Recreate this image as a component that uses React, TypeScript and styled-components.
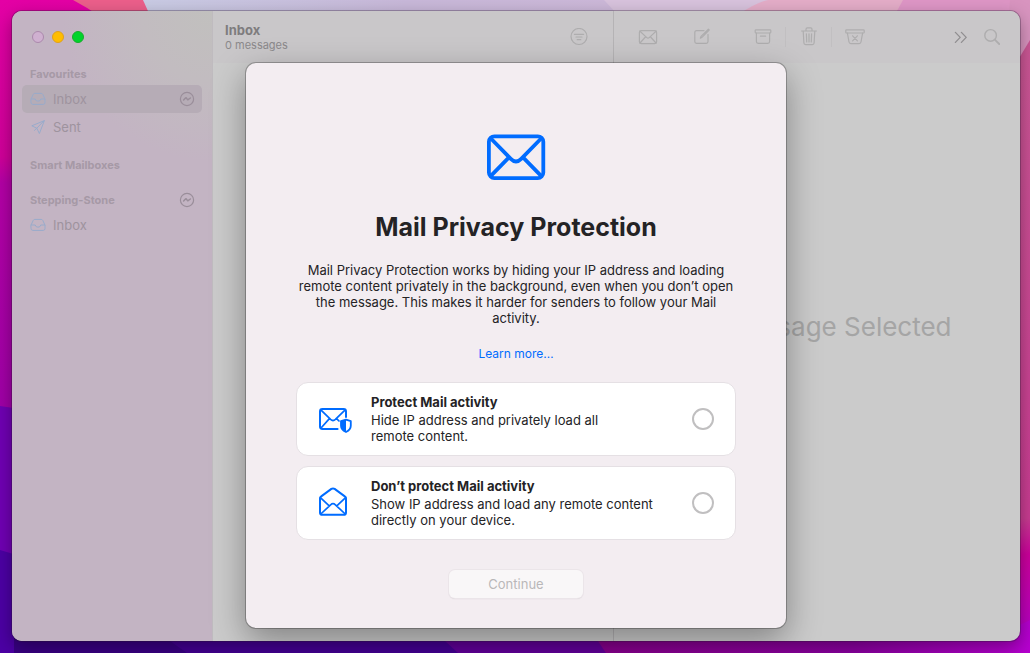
import React from "react";
import styled, { createGlobalStyle } from "styled-components";

const GlobalStyle = createGlobalStyle`
  *, *::before, *::after { box-sizing: border-box; }
  body {
    margin: 0;
    font-family: Inter, "Liberation Sans", sans-serif;
    font-size: 13px;
    line-height: 16px;
    color: #242325;
  }
  h1, h2, p { margin: 0; }
  button { font: inherit; padding: 0; border: 0; background: none; }
`;

const Desktop = styled.div`
  position: relative;
  display: grid;
  min-height: 100vh;
  padding: 11px 10px 12px 12px;
  overflow: hidden;
`;

const WallpaperSvg = styled.svg`
  position: absolute;
  inset: 0;
  width: 100%;
  height: 100%;
`;

const AppWindow = styled.div`
  position: relative;
  display: grid;
  border-radius: 10px;
  overflow: hidden;
  background: #cbcbcb;
  box-shadow: 0 0 0 1px rgba(40, 20, 50, 0.3), 0 6px 18px rgba(0, 0, 0, 0.35);
`;

const MailLayout = styled.div`
  grid-area: 1 / 1;
  display: grid;
  grid-template-columns: 200px minmax(0, 401fr) minmax(0, 407fr);
`;

const Sidebar = styled.nav`
  display: flex;
  flex-direction: column;
  padding: 0 10px;
  background: radial-gradient(circle at 100% 0, #c1c0be 0, #c2bcc0 70px, #c3b4c3 150px);
`;

const WindowControls = styled.div`
  display: flex;
  align-items: center;
  gap: 8px;
  height: 52px;
  padding-left: 10px;
`;

const WindowControl = styled.button<{ $fill: string; $edge: string }>`
  width: 12px;
  height: 12px;
  border-radius: 50%;
  border: 1px solid ${(p) => p.$edge};
  background: ${(p) => p.$fill};
`;

const SidebarSection = styled.section`
  margin-bottom: 13px;
`;

const SectionTitle = styled.h2`
  display: flex;
  align-items: center;
  justify-content: space-between;
  height: 22px;
  padding: 0 7px 0 8px;
  font-size: 11px;
  font-weight: 700;
  color: #a699a6;
`;

const MailboxLink = styled.a<{ $selected?: boolean }>`
  display: flex;
  align-items: center;
  gap: 7px;
  height: 28px;
  padding: 0 7px 0 8px;
  border-radius: 5px;
  color: #9e939e;
  text-decoration: none;
  background: ${(p) => (p.$selected ? "#b6acb6" : "transparent")};
`;

const MailboxName = styled.span`
  flex: 1;
`;

const Pane = styled.section<{ $divided?: boolean }>`
  display: flex;
  flex-direction: column;
  min-width: 0;
  border-left: 1px solid ${(p) => (p.$divided ? "#b5b3b5" : "#bfbbbf")};
`;

const Toolbar = styled.header`
  display: flex;
  align-items: center;
  height: 52px;
  background: #c9c7c9;
  color: #aeadae;
`;

const ListToolbar = styled(Toolbar)`
  justify-content: space-between;
  padding: 0 17px 0 12px;
`;

const MessageToolbar = styled(Toolbar)`
  padding: 0 16px;
`;

const ListTitle = styled.h2`
  font-size: 13px;
  line-height: 16px;
  font-weight: 700;
  color: #7e7c7e;
`;

const ListCount = styled.p`
  font-size: 11px;
  line-height: 14px;
  color: #8b898b;
`;

const ToolGroup = styled.div<{ $gap: number; $before?: number }>`
  display: flex;
  align-items: center;
  gap: ${(p) => p.$gap}px;
  margin-left: ${(p) => p.$before ?? 0}px;
`;

const ToolEnd = styled(ToolGroup)`
  margin-left: auto;
`;

const ToolButton = styled.button<{ $width?: number }>`
  display: flex;
  align-items: center;
  justify-content: center;
  width: ${(p) => p.$width ?? 35}px;
  height: 28px;
  color: inherit;
`;

const MoreButton = styled(ToolButton)`
  color: #908e90;
`;

const ToolDivider = styled.span`
  width: 1px;
  height: 20px;
  background: #c1bfc1;
`;

const EmptyMessage = styled.p`
  display: flex;
  flex: 1;
  align-items: center;
  justify-content: center;
  padding-bottom: 50px;
  font-size: 26px;
  line-height: 32px;
  white-space: nowrap;
  color: #a5a5a5;
`;

const Sheet = styled.div`
  grid-area: 1 / 1;
  position: relative;
  align-self: start;
  justify-self: center;
  display: flex;
  flex-direction: column;
  align-items: center;
  width: 100%;
  max-width: 540px;
  margin: 52px 0 13px;
  padding: 71px 50px 30px;
  border-radius: 10px;
  background: #f3edf1;
  box-shadow: 0 0 0 1px rgba(0, 0, 0, 0.25), 0 12px 34px rgba(0, 0, 0, 0.36);
`;

const SheetTitle = styled.h1`
  margin-top: 31px;
  font-size: 25px;
  line-height: 32px;
  font-weight: 700;
  white-space: nowrap;
`;

const SheetText = styled.p`
  margin-top: 19px;
  text-align: center;
  white-space: nowrap;
`;

const LearnMore = styled.a`
  margin-top: 20px;
  font-size: 12px;
  color: #006cff;
  text-decoration: none;
`;

const Options = styled.div`
  display: flex;
  flex-direction: column;
  gap: 10px;
  width: 100%;
  margin-top: 20px;
`;

const OptionCard = styled.label`
  display: flex;
  align-items: center;
  padding: 11px 21px;
  border: 1px solid #e5e0e4;
  border-radius: 12px;
  background: #ffffff;
`;

const OptionIcon = styled.span`
  display: flex;
  width: 53px;
`;

const OptionBody = styled.span`
  display: flex;
  flex: 1;
  flex-direction: column;
  gap: 2px;
  white-space: nowrap;
`;

const OptionName = styled.strong`
  font-weight: 700;
`;

const OptionRadio = styled.input`
  appearance: none;
  width: 22px;
  height: 22px;
  margin: 0;
  border: 2px solid #c0bfc0;
  border-radius: 50%;
  background: #ffffff;
  &:checked { border: 6px solid #006cff; }
`;

const ContinueButton = styled.button`
  width: 134px;
  height: 28px;
  margin-top: 30px;
  border-radius: 6px;
  color: #b9b7b9;
  background: #f9f7f8;
  box-shadow: 0 0 0 1px #ebe5e9, 0 1px 1px 0 #c8c3c7;
`;

const stroke = {
  fill: "none",
  stroke: "currentColor",
  strokeLinecap: "round" as const,
  strokeLinejoin: "round" as const,
};

const Wallpaper = () => (
  <WallpaperSvg viewBox="0 0 1030 653" preserveAspectRatio="none" aria-hidden="true">
    <defs>
      <linearGradient id="left" x1="0" y1="0" x2="0" y2="1">
        <stop offset="0" stopColor="#e400a5" />
        <stop offset="0.24" stopColor="#d0009a" />
        <stop offset="0.28" stopColor="#b400a6" />
        <stop offset="1" stopColor="#8a00a8" />
      </linearGradient>
      <linearGradient id="right" x1="0" y1="0" x2="0" y2="1">
        <stop offset="0" stopColor="#cb5795" />
        <stop offset="0.78" stopColor="#c83c91" />
        <stop offset="0.84" stopColor="#cc009c" />
        <stop offset="1" stopColor="#b000cc" />
      </linearGradient>
      <linearGradient id="top" x1="0" y1="0" x2="1" y2="0">
        <stop offset="0" stopColor="#c9cbe4" />
        <stop offset="0.4" stopColor="#c8b8d9" />
        <stop offset="1" stopColor="#d0b8d8" />
      </linearGradient>
      <linearGradient id="floor" x1="0" y1="0" x2="1" y2="0">
        <stop offset="0" stopColor="#86008a" />
        <stop offset="0.6" stopColor="#8a00a0" />
        <stop offset="1" stopColor="#b600cf" />
      </linearGradient>
    </defs>
    <rect width="1030" height="653" fill="url(#left)" />
    <path d="M73 0H160V40H130Q100 14 73 0Z" fill="#ec5f8b" />
    <path d="M143 0H800V60H170Z" fill="url(#top)" />
    <path d="M604 0H900V60H660Z" fill="#d8c3dd" />
    <path d="M738 15Q755 3 768 0H910V40H730Z" fill="#e4adc8" />
    <path d="M903 0H1030V60H870Z" fill="#de96c6" />
    <path d="M1010 0H1030V80H1005Z" fill="#d894bf" />
    <path d="M1030 40V653H1000V90Z" fill="url(#right)" />
    <path d="M0 406L40 412V653H0Z" fill="#7000b3" />
    <path d="M0 550L40 562V653H0Z" fill="#4c00a4" />
    <path d="M14 630H600L640 653H14Z" fill="#380082" />
    <path d="M165 636H460V653H187L170 641Z" fill="#430092" />
    <path d="M438 630H600L610 653H458L445 641Z" fill="#600098" />
    <path d="M590 630H1010L1030 620V653H606L598 641Z" fill="url(#floor)" />
  </WallpaperSvg>
);

const TrayIcon = () => (
  <svg width="16" height="14" viewBox="0 0 16 14" {...stroke} color="#98abcb" aria-hidden="true">
    <path d="M1 7.2L3.2 2.4Q3.7 1.4 4.8 1.4H11.2Q12.3 1.4 12.8 2.4L15 7.2V10.6Q15 12.4 13.2 12.4H2.8Q1 12.4 1 10.6ZM1.2 7H5.2Q5.6 9.2 8 9.2T10.8 7H14.8" />
  </svg>
);

const PlaneIcon = () => (
  <svg width="16" height="16" viewBox="0 0 16 16" {...stroke} color="#98abcb" aria-hidden="true">
    <path d="M14 1.8L1.8 6.8L6.8 9.2L9.2 14.2ZM6.8 9.2L14 1.8M6.4 9.4L4.6 11.4" />
  </svg>
);

const OfflineIcon = () => (
  <svg width="16" height="16" viewBox="0 0 16 16" {...stroke} strokeWidth="1.2" color="#9a8e9a" aria-hidden="true">
    <circle cx="8" cy="8" r="6.6" />
    <path d="M4.6 9L6.7 6.8Q7 6.6 7.3 6.9L8.5 8.6Q8.8 8.9 9.1 8.6L11.4 7" strokeWidth="1.5" />
  </svg>
);

const FilterIcon = () => (
  <svg width="18" height="18" viewBox="0 0 18 18" {...stroke} strokeWidth="1.2" aria-hidden="true">
    <circle cx="9" cy="8.5" r="8" />
    <path d="M4.4 6.3H13.6M6 9H12M7.2 11.7H10.8" />
  </svg>
);

const MailIcon = () => (
  <svg width="20" height="16" viewBox="0 0 20 16" {...stroke} strokeWidth="1.2" aria-hidden="true">
    <rect x="1.4" y="1.6" width="17.2" height="13" rx="1.8" />
    <path d="M2 2.2L8.8 8.6Q10 9.7 11.2 8.6L18 2.2M2 14L7.4 8M18 14L12.6 8" />
  </svg>
);

const ComposeIcon = () => (
  <svg width="18" height="18" viewBox="0 0 18 18" {...stroke} strokeWidth="1.2" aria-hidden="true">
    <path d="M11 2.6H3.6Q1.8 2.6 1.8 4.4V13.6Q1.8 15.4 3.6 15.4H13.2Q15 15.4 15 13.6V6.4" />
    <path d="M7.4 10.2L8 8.4L15.4 1.2L16.2 2L9 9.3Z" />
  </svg>
);

const ArchiveIcon = () => (
  <svg width="18" height="16" viewBox="0 0 18 16" {...stroke} strokeWidth="1.2" aria-hidden="true">
    <rect x="1.2" y="0.8" width="15.6" height="3.2" rx="0.8" />
    <path d="M2.4 4.2V12.6Q2.4 14.4 4.2 14.4H13.8Q15.6 14.4 15.6 12.6V4.2M6.4 7.2H11.6" />
  </svg>
);

const TrashIcon = () => (
  <svg width="18" height="20" viewBox="0 0 18 20" {...stroke} strokeWidth="1.2" aria-hidden="true">
    <path d="M1.6 4H16.4M6 3.8V2.2Q6 0.8 7.4 0.8H10.6Q12 0.8 12 2.2V3.8M3.2 4.2L3.9 16Q4 17.6 5.6 17.6H12.4Q14 17.6 14.1 16L14.8 4.2M6.4 6.8L6.7 15M9 6.8V15M11.6 6.8L11.3 15" />
  </svg>
);

const JunkIcon = () => (
  <svg width="20" height="16" viewBox="0 0 20 16" {...stroke} strokeWidth="1.2" aria-hidden="true">
    <rect x="0.8" y="0.8" width="18.4" height="3.2" rx="0.8" />
    <path d="M2.4 4.2L4 13Q4.3 14.6 5.8 14.6H14.2Q15.7 14.6 16 13L17.6 4.2M7.6 6.8L12.4 11.8M12.4 6.8L7.6 11.8" />
  </svg>
);

const MoreIcon = () => (
  <svg width="14" height="12" viewBox="0 0 14 12" {...stroke} strokeWidth="1.3" aria-hidden="true">
    <path d="M1.4 1.4L6.2 6.4L1.4 11.4M7.4 1.4L12.2 6.4L7.4 11.4" />
  </svg>
);

const SearchIcon = () => (
  <svg width="18" height="18" viewBox="0 0 18 18" {...stroke} strokeWidth="1.4" aria-hidden="true">
    <circle cx="7.6" cy="7.4" r="5.8" />
    <path d="M11.8 11.6L16.2 16" strokeWidth="1.8" />
  </svg>
);

const HeroMailIcon = () => (
  <svg width="60" height="46" viewBox="0 0 60 46" {...stroke} strokeWidth="3.8" color="#006cff" aria-hidden="true">
    <rect x="2.9" y="2.3" width="54.4" height="41.8" rx="5.5" />
    <path d="M4.4 4L24.8 24.8Q30 30 35.2 24.8L55.6 4M4.4 42.4L22 24.4M55.6 42.4L38 24.4" strokeLinecap="butt" />
  </svg>
);

const ShieldMailIcon = () => (
  <svg width="36" height="28" viewBox="0 0 36 28" {...stroke} strokeWidth="2" color="#006cff" aria-hidden="true">
    <path d="M19.6 24H4.4Q2 24 2 21.6V6.4Q2 4 4.4 4H25.6Q28 4 28 6.4V12" />
    <path d="M2.8 4.8L12.6 14.4Q15 16.6 17.4 14.4L27.2 4.8M2.8 23.2L11.4 13.6M18.6 13.6L21 16" strokeWidth="1.7" />
    <path d="M28 14.6L32.8 16.2V20.8Q32.8 24.8 28 27Q23 24.8 23 20.8V16.2Z" strokeWidth="1.8" />
    <path d="M28 14.6V27Q23 24.8 23 20.8V16.2Z" fill="currentColor" stroke="none" />
  </svg>
);

const OpenMailIcon = () => (
  <svg width="30" height="32" viewBox="0 0 30 32" {...stroke} strokeWidth="2" color="#006cff" aria-hidden="true">
    <path d="M2 11.6Q2 10.2 3.2 9.4L13.4 1.9Q15 0.9 16.6 1.9L26.8 9.4Q28 10.2 28 11.6V25.4Q28 27.8 25.6 27.8H4.4Q2 27.8 2 25.4Z" />
    <path d="M2.8 27L12.6 17.8Q15 15.6 17.4 17.8L27.2 27M2.4 10.6L11.2 18.8M27.6 10.6L18.8 18.8" strokeWidth="1.7" />
  </svg>
);

const options = [
  {
    id: "protect",
    name: "Protect Mail activity",
    lines: ["Hide IP address and privately load all", "remote content."],
    icon: <ShieldMailIcon />,
  },
  {
    id: "expose",
    name: "Don’t protect Mail activity",
    lines: ["Show IP address and load any remote content", "directly on your device."],
    icon: <OpenMailIcon />,
  },
];

export default function App() {
  return (
    <>
      <GlobalStyle />
      <Desktop>
        <Wallpaper />
        <AppWindow>
          <MailLayout>
            <Sidebar aria-label="Mailboxes">
              <WindowControls>
                <WindowControl aria-label="Close" $fill="#cfb0d0" $edge="#ab89ac" />
                <WindowControl aria-label="Minimise" $fill="#ffbd00" $edge="#e0a01c" />
                <WindowControl aria-label="Zoom" $fill="#00d42b" $edge="#18ac2c" />
              </WindowControls>
              <SidebarSection>
                <SectionTitle>Favourites</SectionTitle>
                <MailboxLink href="#inbox" $selected>
                  <TrayIcon />
                  <MailboxName>Inbox</MailboxName>
                  <OfflineIcon />
                </MailboxLink>
                <MailboxLink href="#sent">
                  <PlaneIcon />
                  <MailboxName>Sent</MailboxName>
                </MailboxLink>
              </SidebarSection>
              <SidebarSection>
                <SectionTitle>Smart Mailboxes</SectionTitle>
              </SidebarSection>
              <SidebarSection>
                <SectionTitle>
                  Stepping-Stone
                  <OfflineIcon />
                </SectionTitle>
                <MailboxLink href="#stepping-stone">
                  <TrayIcon />
                  <MailboxName>Inbox</MailboxName>
                </MailboxLink>
              </SidebarSection>
            </Sidebar>

            <Pane>
              <ListToolbar>
                <div>
                  <ListTitle>Inbox</ListTitle>
                  <ListCount>0 messages</ListCount>
                </div>
                <ToolButton aria-label="Filter"><FilterIcon /></ToolButton>
              </ListToolbar>
            </Pane>

            <Pane $divided>
              <MessageToolbar>
                <ToolGroup $gap={19}>
                  <ToolButton aria-label="Get mail"><MailIcon /></ToolButton>
                  <ToolButton aria-label="New message"><ComposeIcon /></ToolButton>
                </ToolGroup>
                <ToolGroup $gap={5} $before={26}>
                  <ToolButton aria-label="Archive"><ArchiveIcon /></ToolButton>
                  <ToolDivider />
                  <ToolButton aria-label="Delete"><TrashIcon /></ToolButton>
                  <ToolDivider />
                  <ToolButton aria-label="Junk"><JunkIcon /></ToolButton>
                </ToolGroup>
                <ToolEnd $gap={7}>
                  <MoreButton aria-label="More" $width={24}><MoreIcon /></MoreButton>
                  <ToolButton aria-label="Search" $width={24}><SearchIcon /></ToolButton>
                </ToolEnd>
              </MessageToolbar>
              <EmptyMessage>No Message Selected</EmptyMessage>
            </Pane>
          </MailLayout>

          <Sheet role="dialog" aria-labelledby="sheet-title">
            <HeroMailIcon />
            <SheetTitle id="sheet-title">Mail Privacy Protection</SheetTitle>
            <SheetText>
              Mail Privacy Protection works by hiding your IP address and loading<br />
              remote content privately in the background, even when you don’t open<br />
              the message. This makes it harder for senders to follow your Mail<br />
              activity.
            </SheetText>
            <LearnMore href="#learn-more">Learn more…</LearnMore>
            <Options role="radiogroup" aria-labelledby="sheet-title">
              {options.map((o) => (
                <OptionCard key={o.id} htmlFor={o.id}>
                  <OptionIcon>{o.icon}</OptionIcon>
                  <OptionBody>
                    <OptionName>{o.name}</OptionName>
                    <span>
                      {o.lines[0]}
                      <br />
                      {o.lines[1]}
                    </span>
                  </OptionBody>
                  <OptionRadio type="radio" name="privacy" id={o.id} />
                </OptionCard>
              ))}
            </Options>
            <ContinueButton disabled>Continue</ContinueButton>
          </Sheet>
        </AppWindow>
      </Desktop>
    </>
  );
}
